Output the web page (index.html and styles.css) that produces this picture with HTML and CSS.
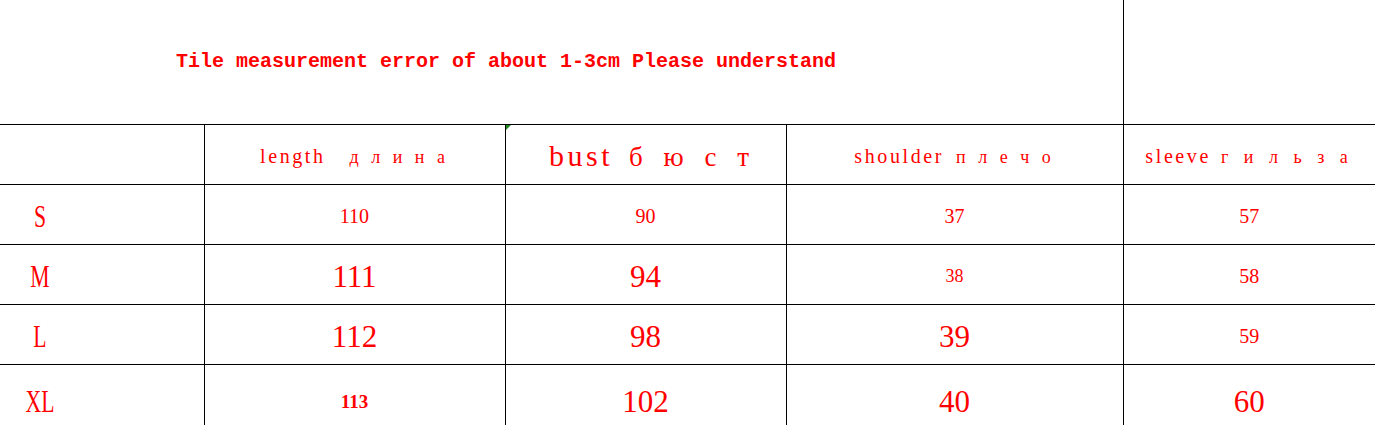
FILE: index.html
```html
<!DOCTYPE html>
<html lang="en">
<head>
<meta charset="utf-8">
<title>Size chart</title>
<link rel="stylesheet" href="styles.css">
</head>
<body>
<table class="chart">
  <colgroup>
    <col class="c1"><col class="c2"><col class="c3"><col class="c4"><col class="c5">
  </colgroup>
  <tr class="r-title">
    <td colspan="4" class="title">Tile measurement error of about 1-3cm Please understand</td>
    <td class="blank"></td>
  </tr>
  <tr class="r-head">
    <td class="first"></td>
    <td class="head">length<span class="gap"></span><span class="cy">д л и н а</span></td>
    <td class="head big-head"><span class="mark"></span>bust<span class="gap2"></span><span class="cy cy-big">б ю с т</span></td>
    <td class="head">shoulder<span class="gap3"></span><span class="cy">п л е ч о</span></td>
    <td class="head">sleeve<span class="gap4"></span><span class="cy cy-wide">г и л ь з а</span></td>
  </tr>
  <tr class="r-data">
    <td class="first"><span class="size">S</span></td>
    <td class="n-s">110</td>
    <td class="n-s">90</td>
    <td class="n-s">37</td>
    <td class="n-s">57</td>
  </tr>
  <tr class="r-data">
    <td class="first"><span class="size">M</span></td>
    <td class="n-l">111</td>
    <td class="n-l">94</td>
    <td class="n-xs">38</td>
    <td class="n-s">58</td>
  </tr>
  <tr class="r-data">
    <td class="first"><span class="size">L</span></td>
    <td class="n-l">112</td>
    <td class="n-l">98</td>
    <td class="n-l">39</td>
    <td class="n-s">59</td>
  </tr>
  <tr class="r-last">
    <td class="first"><span class="size">XL</span></td>
    <td class="n-b">113</td>
    <td class="n-l">102</td>
    <td class="n-l">40</td>
    <td class="n-l">60</td>
  </tr>
</table>
</body>
</html>
```
FILE: styles.css
```css
html, body {
  margin: 0;
  padding: 0;
  background: #fff;
  overflow: hidden;
}

.chart {
  border-collapse: collapse;
  table-layout: fixed;
  width: 1375px;
  font-family: "Liberation Serif", "DejaVu Serif", serif;
  color: #ff0000;
}

.c1 { width: 204px; }
.c2 { width: 301px; }
.c3 { width: 281px; }
.c4 { width: 337px; }
.c5 { width: 252px; }

.chart td {
  border: 1px solid #000;
  padding: 0;
  text-align: center;
  vertical-align: middle;
  line-height: 1;
  white-space: nowrap;
}

.chart tr td:first-child { border-left: none; }
.chart tr td:last-child { border-right: none; }

.r-title td { border-top: none; }
.r-title { height: 124px; }
.r-head { height: 60px; }
.r-data { height: 60px; }
.r-last { height: 70px; }

.title {
  text-align: left !important;
  padding-left: 176px !important;
  padding-bottom: 0 !important;
  font-family: "Liberation Mono", "DejaVu Sans Mono", monospace;
  font-weight: bold;
  font-size: 20px;
}

.head {
  font-size: 20px;
  letter-spacing: 2.6px;
  position: relative;
  padding-top: 3px !important;
}

.head .cy {
  font-size: 18px;
  letter-spacing: 4px;
}

.head .cy-wide {
  letter-spacing: 5.5px;
}

.gap { display: inline-block; width: 24px; }
.gap2 { display: inline-block; width: 16px; }
.gap3 { display: inline-block; width: 12px; }
.gap4 { display: inline-block; width: 10px; }

.big-head {
  font-size: 30px;
  letter-spacing: 3.5px;
  padding-left: 14px !important;
}

.big-head .cy-big {
  font-size: 27px;
  letter-spacing: 7px;
}

.mark {
  position: absolute;
  left: 0;
  top: 0;
  width: 0;
  height: 0;
  border-top: 5px solid #1f8a1f;
  border-right: 5px solid transparent;
}

.first {
  text-align: left !important;
}

.size {
  display: inline-block;
  width: 80px;
  text-align: center;
  font-size: 31px;
  transform: scaleX(0.7);
  padding-top: 4px;
}

.n-s { font-size: 20px; padding-top: 4px !important; }
.n-xs { font-size: 18px; padding-top: 4px !important; }
.n-l { font-size: 31px; padding-top: 4px !important; }
.n-b { font-size: 19px; font-weight: bold; padding-top: 4px !important; }
```
